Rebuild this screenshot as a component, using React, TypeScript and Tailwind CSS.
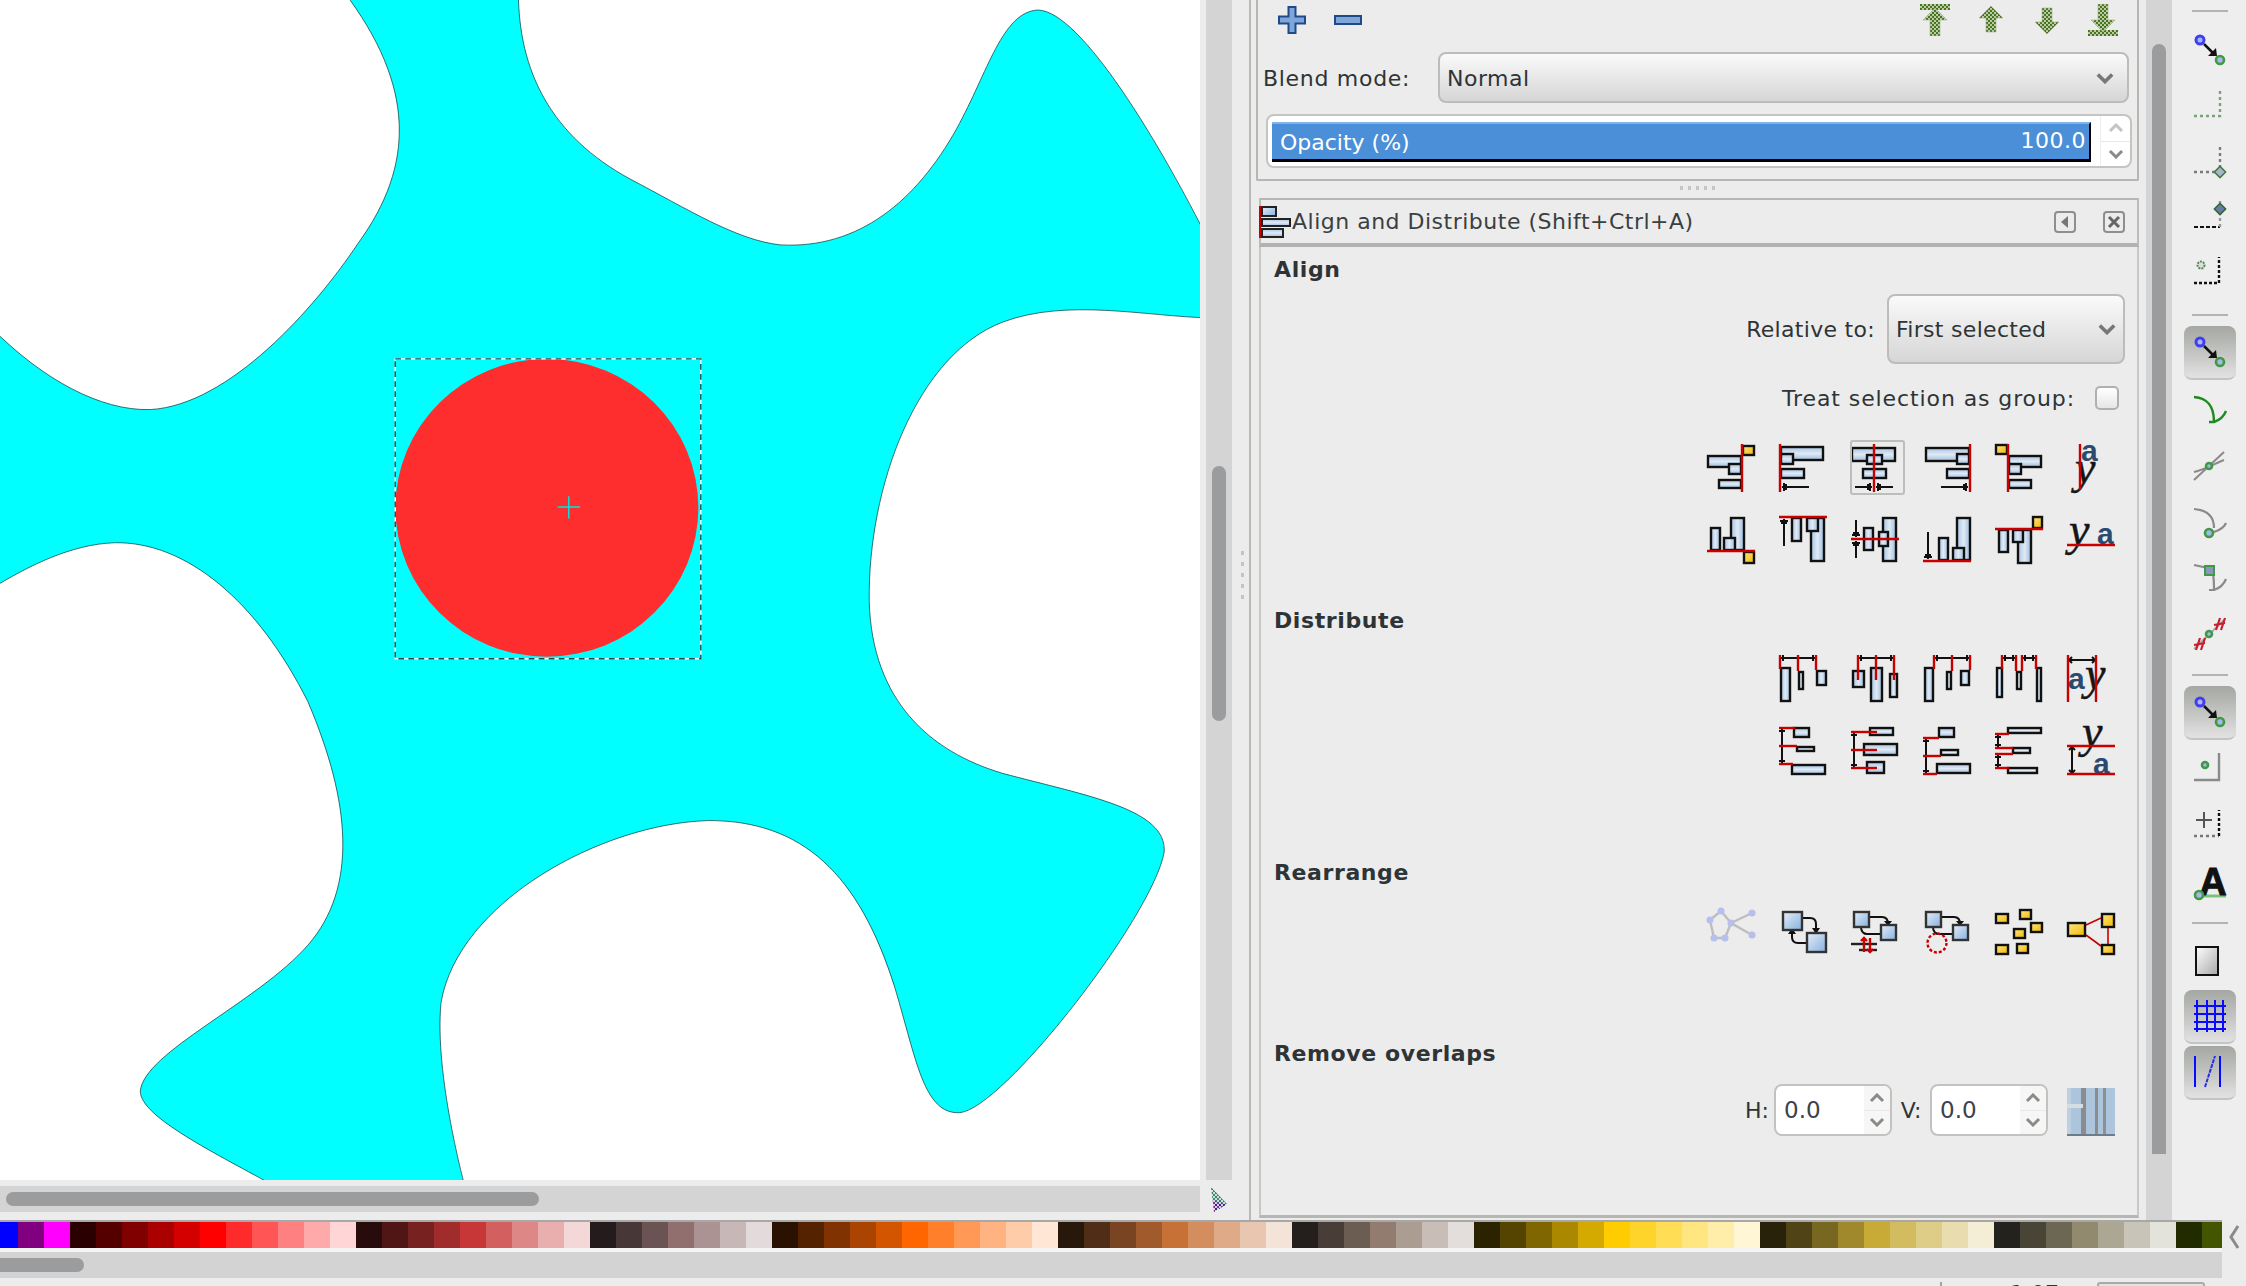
import React from "react";

const FONT = "font-['DejaVu_Sans',sans-serif]";

const Defs = () => (
  <svg width="0" height="0" className="absolute">
    <defs>
      <linearGradient id="bh" x1="0" y1="0" x2="0" y2="1">
        <stop offset="0" stopColor="#a9c3e0" />
        <stop offset="0.5" stopColor="#dfeaf6" />
        <stop offset="1" stopColor="#9fbcdb" />
      </linearGradient>
      <linearGradient id="bv" x1="0" y1="0" x2="1" y2="0">
        <stop offset="0" stopColor="#a9c3e0" />
        <stop offset="0.5" stopColor="#dfeaf6" />
        <stop offset="1" stopColor="#9fbcdb" />
      </linearGradient>
      <linearGradient id="sq" x1="0" y1="0" x2="1" y2="1">
        <stop offset="0" stopColor="#e6eef8" />
        <stop offset="1" stopColor="#86b0de" />
      </linearGradient>
      <linearGradient id="yl" x1="0" y1="0" x2="1" y2="1">
        <stop offset="0" stopColor="#ffe680" />
        <stop offset="1" stopColor="#f2b705" />
      </linearGradient>
      <linearGradient id="pg" x1="0" y1="0" x2="1" y2="1">
        <stop offset="0" stopColor="#ffffff" />
        <stop offset="1" stopColor="#a8a8a8" />
      </linearGradient>
      <pattern id="gc" width="4" height="4" patternUnits="userSpaceOnUse">
        <rect width="4" height="4" fill="#b9cba0" />
        <rect width="2" height="2" fill="#4a7424" />
        <rect x="2" y="2" width="2" height="2" fill="#4a7424" />
      </pattern>
      <pattern id="cm" width="4" height="4" patternUnits="userSpaceOnUse">
        <rect width="4" height="4" fill="#d8dcd8" />
        <rect width="2" height="2" fill="#2f9a5f" />
        <rect x="2" y="2" width="2" height="2" fill="#3a7a7a" />
      </pattern>
      <pattern id="cn" width="4" height="4" patternUnits="userSpaceOnUse">
        <rect width="4" height="4" fill="#d8d0dc" />
        <rect width="2" height="2" fill="#8a2f9a" />
        <rect x="2" y="2" width="2" height="2" fill="#2a2a9a" />
      </pattern>
    </defs>
  </svg>
);

type N = number[];
type Ic = {
  b?: N[];
  s?: N[];
  y?: N[];
  r?: N[];
  k?: N[];
  extra?: React.ReactNode;
  o?: number;
};

const RED = "#c80000";

const vr = (x: number, y2 = 48, y1 = 0) => [x, y1, x, y2];
const hr = (y: number, x2 = 48, x1 = 0) => [x1, y, x2, y];

const harrow = (y: number, from: number, to: number): N[] => {
  const d = to > from ? -1 : 1;
  return [
    [from, y, to, y],
    [to + d * 2, y - 4, to + d * 2, y + 4],
    [to + d * 4, y - 3, to + d * 4, y + 3],
  ];
};
const varrow = (x: number, from: number, to: number): N[] => {
  const d = to > from ? -1 : 1;
  return [
    [x, from, x, to],
    [x - 4, to + d * 2, x + 4, to + d * 2],
    [x - 3, to + d * 4, x + 3, to + d * 4],
  ];
};
const hdim = (y: number, ...xs: number[]): N[] => [
  [xs[0], y, xs[xs.length - 1], y],
  ...xs.slice(1, -1).map((x) => [x, y - 3, x, y + 3]),
  [xs[0] + 3, y - 3, xs[0] + 3, y + 3],
  [xs[xs.length - 1] - 3, y - 3, xs[xs.length - 1] - 3, y + 3],
];
const vdim = (x: number, ...ys: number[]): N[] => [
  [x, ys[0], x, ys[ys.length - 1]],
  ...ys.slice(1, -1).map((y) => [x - 3, y, x + 3, y]),
  [x - 3, ys[0] + 3, x + 3, ys[0] + 3],
  [x - 3, ys[ys.length - 1] - 3, x + 3, ys[ys.length - 1] - 3],
];

const GA = ({ x, y, s = 30 }: { x: number; y: number; s?: number }) => (
  <text x={x} y={y} fontFamily="Liberation Sans" fontWeight="700" fontSize={s} fill="#2c4a6e">
    a
  </text>
);
const GY = ({ x, y, s = 46 }: { x: number; y: number; s?: number }) => (
  <text x={x} y={y} fontFamily="Liberation Serif" fontStyle="italic" fontSize={s} fill="#151515" stroke="#151515" strokeWidth="0.5">
    y
  </text>
);

const Icon = ({ d }: { d: Ic }) => (
  <svg width="48" height="48" viewBox="0 0 48 48" overflow="visible" opacity={d.o ?? 1}>
    {d.extra}
    {d.b?.map((b, i) => (
      <rect
        key={"b" + i}
        x={b[0] + 1}
        y={b[1] + 1}
        width={b[2] - 2}
        height={b[3] - 2}
        fill={b[2] > b[3] ? "url(#bh)" : "url(#bv)"}
        stroke="#111"
        strokeWidth="2.4"
      />
    ))}
    {d.s?.map((b, i) => (
      <rect key={"s" + i} x={b[0] + 1} y={b[1] + 1} width={b[2] - 2} height={b[3] - 2} fill="url(#sq)" stroke="#333" strokeWidth="2.4" />
    ))}
    {d.y?.map((b, i) => (
      <rect key={"y" + i} x={b[0] + 1} y={b[1] + 1} width={b[2] - 2} height={b[3] - 2} fill="url(#yl)" stroke="#111" strokeWidth="2.4" />
    ))}
    {d.k?.map((l, i) => (
      <line key={"k" + i} x1={l[0]} y1={l[1]} x2={l[2]} y2={l[3]} stroke="#111" strokeWidth="2" />
    ))}
    {d.r?.map((l, i) => (
      <line key={"r" + i} x1={l[0]} y1={l[1]} x2={l[2]} y2={l[3]} stroke={RED} strokeWidth="2.4" />
    ))}
  </svg>
);

const alignRows: Ic[][] = [
  [
    { r: [vr(35)], y: [[35, 1, 13, 11]], b: [[0, 11, 35, 13], [21, 19, 14, 12], [11, 35, 24, 10]] },
    { r: [vr(1)], b: [[1, 2, 44, 15], [1, 9, 14, 12], [1, 24, 25, 11]], k: harrow(43, 30, 3) },
    { r: [vr(23)], b: [[0, 3, 45, 15], [15, 10, 17, 11], [11, 24, 25, 11]], k: [...harrow(43, 4, 21), ...harrow(43, 42, 25)] },
    { r: [vr(47)], b: [[2, 3, 45, 15], [33, 9, 14, 12], [23, 24, 24, 11]], k: harrow(43, 18, 45) },
    { r: [vr(13)], y: [[0, 0, 13, 11]], b: [[13, 11, 34, 13], [13, 19, 14, 12], [13, 35, 24, 10]] },
    { r: [vr(13, 46)], extra: <><GA x={14} y={17} /><GY x={8} y={39} /></> },
  ],
  [
    { r: [hr(35)], y: [[36, 35, 12, 13]], b: [[3, 11, 11, 24], [23, 1, 15, 34], [16, 21, 13, 14]] },
    { r: [hr(1)], b: [[12, 1, 11, 25], [31, 1, 15, 45], [27, 1, 13, 15]], k: varrow(5, 30, 3) },
    { r: [hr(23)], b: [[12, 11, 11, 24], [31, 1, 15, 45], [27, 15, 11, 16]], k: [...varrow(5, 4, 21), ...varrow(5, 42, 25)] },
    { r: [hr(45)], b: [[15, 21, 11, 24], [33, 1, 15, 44], [29, 31, 13, 14]], k: varrow(5, 16, 43) },
    { r: [hr(13)], y: [[37, 0, 11, 13]], b: [[3, 13, 11, 24], [22, 13, 15, 35], [17, 13, 12, 14]] },
    { r: [hr(29)], extra: <><GY x={2} y={29} /><GA x={30} y={28} /></> },
  ],
];

const distRows: Ic[][] = [
  [
    { r: [vr(1, 14), vr(19, 16), vr(37, 15)], b: [[1, 12, 11, 35], [19, 16, 6, 19], [37, 15, 11, 16]], k: hdim(3, 1, 19, 37) },
    { b: [[1, 15, 13, 18], [19, 12, 13, 35], [38, 18, 9, 25]], r: [vr(7, 25), vr(25, 25), vr(43, 25)], k: hdim(3, 7, 25, 43) },
    { r: [vr(11, 14), vr(29, 16), vr(47, 15)], b: [[1, 12, 10, 35], [23, 16, 6, 19], [37, 15, 10, 16]], k: hdim(3, 11, 29, 47) },
    { r: [vr(7, 14), vr(21, 16), vr(27, 16), vr(41, 14)], b: [[1, 12, 7, 31], [21, 16, 6, 19], [41, 12, 6, 35]], k: [...hdim(3, 7, 21), ...hdim(3, 27, 41)] },
    { r: [vr(1, 47), vr(29, 47)], k: [[2, 5, 28, 5], [5, 2, 2, 5], [5, 8, 2, 5], [25, 2, 28, 5], [25, 8, 28, 5]], extra: <><GA x={1} y={34} /><GY x={18} y={34} /></> },
  ],
  [
    { r: [hr(1, 16), hr(19, 18), hr(37, 14)], b: [[14, 0, 17, 11], [17, 19, 19, 6], [12, 37, 35, 11]], k: vdim(3, 1, 19, 37) },
    { b: [[18, 0, 25, 9], [12, 16, 35, 13], [15, 34, 19, 13]], r: [hr(5, 26), hr(23, 26), hr(41, 26)], k: vdim(3, 5, 23, 41) },
    { r: [hr(11, 16), hr(29, 18), hr(47, 14)], b: [[15, 0, 17, 11], [17, 22, 19, 7], [13, 36, 35, 11]], k: vdim(3, 11, 29, 47) },
    { r: [hr(7, 14), hr(21, 18), hr(27, 18), hr(41, 14)], b: [[12, 0, 35, 7], [17, 20, 19, 7], [12, 40, 31, 7]], k: [...vdim(3, 7, 21), ...vdim(3, 27, 41)] },
    { r: [hr(19), hr(47)], k: [[5, 20, 5, 46], [2, 23, 5, 20], [8, 23, 5, 20], [2, 43, 5, 46], [8, 43, 5, 46]], extra: <><GY x={15} y={20} /><GA x={26} y={47} /></> },
  ],
];

const Curve = ({ d }: { d: string }) => <path d={d} fill="none" stroke="#111" strokeWidth="2" />;
const Head = ({ p }: { p: string }) => <polygon points={p} fill="#111" />;

const rearrange: Ic[] = [
  {
    extra: (
      <g opacity="0.55">
        <polyline points="14,3 3,12 7,30 18,30 24,15 14,3" fill="none" stroke="#9a9a9a" strokeWidth="2.4" />
        <polyline points="45,5 24,15 45,27" fill="none" stroke="#9a9a9a" strokeWidth="2.4" />
        {[[14, 3], [3, 12], [7, 30], [18, 30], [24, 15], [45, 5], [45, 27]].map((c, i) => (
          <circle key={i} cx={c[0]} cy={c[1]} r="3.5" fill="#8c9cf0" />
        ))}
      </g>
    ),
  },
  {
    s: [[3, 3, 21, 20], [27, 24, 21, 21]],
    extra: (
      <>
        <Curve d="M24 10 H31 Q37 10 37 16 V24" />
        <Head p="33,20 41,20 37,26" />
        <Curve d="M27 35 H19 Q13 35 13 29 V23" />
        <Head p="9,26 17,26 13,20" />
      </>
    ),
  },
  {
    s: [[2, 3, 17, 17], [29, 16, 17, 17]],
    extra: (
      <>
        <Curve d="M19 9 H31 Q37 9 37 16" />
        <Head p="33,13 41,13 37,18" />
        <Curve d="M29 26 H16 Q11 26 10 20" />
        <line x1="0" y1="36" x2="26" y2="36" stroke="#222" strokeWidth="2.4" />
        <line x1="8" y1="42" x2="26" y2="42" stroke="#222" strokeWidth="2.4" />
        <path d="M13 44 V30 M10 33 L13 30 L16 33 M19 30 V44 M16 41 L19 44 L22 41" fill="none" stroke={RED} strokeWidth="2.4" />
      </>
    ),
  },
  {
    s: [[2, 3, 17, 17], [29, 16, 17, 17]],
    extra: (
      <>
        <Curve d="M19 9 H31 Q37 9 37 16" />
        <Head p="33,13 41,13 37,18" />
        <Curve d="M29 26 H16 Q11 26 10 20" />
        <circle cx="14" cy="35" r="9.5" fill="none" stroke={RED} strokeWidth="2.4" strokeDasharray="3 2" />
      </>
    ),
  },
  { y: [[0, 5, 14, 11], [24, 1, 13, 11], [35, 14, 13, 11], [18, 20, 13, 11], [0, 36, 14, 11], [21, 35, 13, 11]] },
  {
    extra: (
      <g stroke={RED} strokeWidth="1.6">
        <line x1="19" y1="17" x2="34" y2="10" />
        <line x1="19" y1="27" x2="34" y2="38" />
        <line x1="41" y1="20" x2="41" y2="36" />
      </g>
    ),
    y: [[0, 14, 19, 15], [34, 5, 14, 15], [34, 36, 14, 11]],
  },
];

const Chevron = ({ up = false, c = "#8a8a87", w = 16, h = 10 }: { up?: boolean; c?: string; w?: number; h?: number }) => (
  <svg width={w} height={h} viewBox="0 0 16 10">
    <path d={up ? "M2 8 L8 2 L14 8" : "M2 2 L8 8 L14 2"} fill="none" stroke={c} strokeWidth="3" />
  </svg>
);

const Spin = ({ v }: { v: string }) => (
  <div className="flex h-[52px] w-[118px] shrink-0 overflow-hidden rounded-lg border-2 border-[#c2c2be] bg-white">
    <div className="flex flex-1 items-center pl-[8px] text-[23px] text-[#3c4245]">{v}</div>
    <div className="flex w-[26px] flex-col bg-[#f6f6f6]">
      <div className="flex flex-1 items-center justify-center border-b border-[#e8e8e8]">
        <Chevron up />
      </div>
      <div className="flex flex-1 items-center justify-center">
        <Chevron />
      </div>
    </div>
  </div>
);

const Header = ({ children, cls }: { children: React.ReactNode; cls: string }) => (
  <div className={`flex h-[44px] shrink-0 items-center pl-[13px] text-[22px] font-bold tracking-[0.6px] text-[#2e3436] ${cls}`}>{children}</div>
);

const IconRow = ({ icons, cls }: { icons: Ic[]; cls?: string }) => (
  <div className={`flex justify-end pr-[10px] ${cls ?? ""}`}>
    {icons.map((d, i) => (
      <div key={i} className="flex h-[72px] w-[72px] items-center justify-center">
        <Icon d={d} />
      </div>
    ))}
  </div>
);

const Canvas = () => (
  <svg viewBox="0 0 838 824" className="block h-full w-full bg-white" preserveAspectRatio="none">
    <path
      d="M362 -6 C362 50 385 95 440 125 C480 146 515 168 545 171 C600 174 640 140 668 90 C690 50 700 8 725 7 C755 8 810 100 845 170 L845 222 C800 221 745 208 700 225 C640 248 606 340 607 420 C609 490 650 525 700 540 C760 556 815 565 813 595 C805 640 700 775 670 777 C645 778 640 740 625 690 C600 610 560 573 495 573 C420 575 320 630 308 700 C303 750 325 830 325 830 L195 830 C150 805 98 780 98 762 C100 735 180 700 215 660 C250 620 245 560 215 490 C180 420 130 378 80 379 C50 380 20 395 -6 411 L-6 229 C30 265 70 287 105 286 C160 283 220 215 250 170 C290 115 290 60 240 -6 Z"
      fill="#00ffff"
      stroke="#0a3a3a"
      strokeWidth="0.5"
    />
    <ellipse cx="381.9" cy="354.6" rx="105.8" ry="104" fill="#ff2e2e" />
    <rect x="276" y="250.6" width="213.4" height="209.4" fill="none" stroke="#ffffff" strokeWidth="1" />
    <rect x="276" y="250.6" width="213.4" height="209.4" fill="none" stroke="#0c5258" strokeWidth="1" strokeDasharray="4 3" />
    <path d="M389.5 354 H405 M397.2 346.5 V362" stroke="#00e5e5" strokeWidth="1" />
  </svg>
);

const T = ({ children }: { children: React.ReactNode }) => (
  <svg width="36" height="36" viewBox="-2 -2 36 36" overflow="visible">
    {children}
  </svg>
);
const GN = ({ x, y, r = 4 }: { x: number; y: number; r?: number }) => (
  <circle cx={x} cy={y} r={r} fill="#a9b4e8" stroke="#3f9a46" strokeWidth="2.6" />
);
const Snap = () => (
  <T>
    <circle cx="6" cy="6" r="4" fill="#a9b4f0" stroke="#4040f0" strokeWidth="3" />
    <line x1="10" y1="10" x2="20" y2="20" stroke="#111" strokeWidth="2.5" />
    <polygon points="23,22 14,22 22,14" fill="#111" />
    <GN x={26} y={26} />
  </T>
);
const Dash = ({ d, c = "#777", a = "3 3" }: { d: string; c?: string; a?: string }) => (
  <path d={d} fill="none" stroke={c} strokeWidth="2.4" strokeDasharray={a} />
);

const toolbar: { h: string; btn?: boolean; sep?: boolean; el?: React.ReactNode }[] = [
  { h: "h-[76px]", el: <Snap /> },
  { h: "h-[36px]", el: <T><Dash d="M0 26 H26 V0" c="#7aa27a" /></T> },
  { h: "h-[76px]", el: <T><Dash d="M0 26 H26 V0" c="#7b7b7b" /><rect x="22" y="22" width="8" height="8" transform="rotate(45 26 26)" fill="#a9b4c8" stroke="#3f7a46" strokeWidth="1.5" /></T> },
  { h: "h-[34px]", el: <T><path d="M0 26 H26" stroke="#111" strokeWidth="2" strokeDasharray="4 2" /><Dash d="M26 26 V0" c="#999" /><rect x="22" y="4" width="8" height="8" transform="rotate(45 26 8)" fill="#6a7aa8" stroke="#2f6a36" strokeWidth="1.5" /></T> },
  { h: "h-[78px]", el: <T><Dash d="M0 26 H25 V0" c="#111" a="3 2" /><circle cx="7" cy="8" r="3.5" fill="#ddd" stroke="#4f8a56" strokeWidth="2" strokeDasharray="2 1" /></T> },
  { h: "h-[6px]", sep: true },
  { h: "h-[8px]" },
  { h: "h-[54px]", btn: true, el: <Snap /> },
  { h: "h-[64px]", el: <T><path d="M0 1 C12 2 20 8 20 26 M15 26 H20 C26 24 30 20 32 15" fill="none" stroke="#1f8a1f" strokeWidth="2.4" /></T> },
  { h: "h-[44px]", el: <T><path d="M0 30 L30 2 M0 22 C10 20 20 14 30 10" fill="none" stroke="#8a8a8a" strokeWidth="2" /><GN x={15} y={16} r={3} /></T> },
  { h: "h-[72px]", el: <T><path d="M0 1 C12 2 20 8 20 20 M20 24 C26 22 30 20 32 15" fill="none" stroke="#8a8a8a" strokeWidth="2.2" /><GN x={15} y={25} /></T> },
  { h: "h-[40px]", el: <T><path d="M0 1 L14 4 C20 8 20 14 20 26 M15 26 H20 C26 24 30 20 32 15" fill="none" stroke="#8a8a8a" strokeWidth="2.2" /><rect x="11" y="2" width="9" height="9" fill="#8a96c0" stroke="#3f9a46" strokeWidth="2" /></T> },
  { h: "h-[68px]", el: <T><line x1="0" y1="31" x2="30" y2="2" stroke="#aaa" strokeWidth="2" /><path d="M6 20 L2 32 M11 20 L7 32 M0 27 L11 25 M26 0 L22 12 M31 0 L27 12 M20 7 L31 5" stroke="#c81e2e" strokeWidth="2.2" /><GN x={15} y={16} r={3} /></T> },
  { h: "h-[14px]", sep: true },
  { h: "h-[4px]" },
  { h: "h-[54px]", btn: true, el: <Snap /> },
  { h: "h-[58px]", el: <T><path d="M0 27 H25 V0" fill="none" stroke="#8a8a8a" strokeWidth="2.4" /><GN x={11} y={12} r={3} /></T> },
  { h: "h-[56px]", el: <T><path d="M2 10 H18 M10 2 V18" stroke="#555" strokeWidth="2" /><Dash d="M0 26 H25" c="#777" /><Dash d="M25 26 V0" c="#111" a="3 2" /></T> },
  { h: "h-[58px]", el: <T>
    <path d="M0 29 H32" stroke="#7cc07c" strokeWidth="3" />
    <text x="19" y="28" textAnchor="middle" fontFamily="Liberation Sans" fontWeight="700" fontSize="38" stroke="#111" strokeWidth="1" fill="#111">A</text>
    <GN x={5} y={28} />
  </T> },
  { h: "h-[22px]", sep: true },
  { h: "h-[56px]", el: <T><rect x="2" y="1" width="22" height="28" fill="url(#pg)" stroke="#111" strokeWidth="2" /></T> },
  { h: "h-[54px]", btn: true, el: <T><path d="M0 6 H32 M0 14 H32 M0 22 H32 M0 29 H32 M3 0 V32 M13 0 V32 M21 0 V32 M29 0 V32" stroke="#0a0aff" strokeWidth="2" /></T> },
  { h: "h-[2px]" },
  { h: "h-[54px]", btn: true, el: <T><path d="M1 0 V31 M26 0 V31" stroke="#0a0aff" strokeWidth="2" /><path d="M11 31 L21 0" stroke="#2a2ae8" strokeWidth="2" strokeDasharray="4 1" /></T> },
];

const palette = [
  "#0000ff","#800080","#ff00ff",
  "#2b0000","#550000","#800000","#aa0000","#d40000","#ff0000","#ff2a2a","#ff5555","#ff8080","#ffaaaa","#ffd5d5",
  "#280b0b","#501616","#782121","#a02c2c","#c83737","#d35f5f","#de8787","#e9afaf","#f4d7d7",
  "#241c1c","#483737","#6c5353","#916f6f","#ac9393","#c8b7b7","#e3dbdb",
  "#2b1100","#552200","#803300","#aa4400","#d45500","#ff6600","#ff7f2a","#ff9955","#ffb380","#ffccaa","#ffe6d5",
  "#28170b","#502d16","#784421","#a05a2c","#c87137","#d38d5f","#deaa87","#e9c6af","#f4e3d7",
  "#241f1c","#483e37","#6c5d53","#917c6f","#ac9d93","#c8beb7","#e3dedb",
  "#2b2200","#554400","#806600","#aa8800","#d4aa00","#ffcc00","#ffd42a","#ffdd55","#ffe680","#ffeeaa","#fff6d5",
  "#28220b","#504416","#786721","#a0892c","#c8ab37","#d3bc5f","#decd87","#e9ddaf","#f4eed7",
  "#24221c","#484537","#6c6753","#918a6f","#aca793","#c8c4b7","#e3e2db",
  "#222b00","#445500",
];

const Arrow = ({ up, bar }: { up: boolean; bar?: boolean }) => (
  <svg width="30" height="32" viewBox="0 0 30 32">
    <g transform={up ? undefined : "rotate(180 15 16)"}>
      {bar && <rect x="0" y="0" width="30" height="6" fill="url(#gc)" />}
      <polygon points={bar ? "15,4 27,16 20,16 20,32 10,32 10,16 3,16" : "15,2 27,14 20,14 20,28 10,28 10,14 3,14"} fill="url(#gc)" stroke="#9fb388" strokeWidth="0.6" />
    </g>
  </svg>
);

export default function App() {
  return (
    <div className={`flex h-[1286px] w-[2246px] flex-col overflow-hidden bg-[#ececec] text-[#2e3436] ${FONT}`}>
      <Defs />
      <div className="flex h-[1220px] shrink-0">
        {/* canvas column */}
        <div className="flex w-[1232px] shrink-0 flex-col">
          <div className="flex h-[1180px] shrink-0">
            <div className="h-full w-[1200px] shrink-0">
              <Canvas />
            </div>
            <div className="ml-[6px] flex h-full w-[26px] flex-col bg-[#d4d4d4] px-[6px] pt-[466px]">
              <div className="h-[255px] rounded-full bg-[#9b9c9e]" />
            </div>
          </div>
          <div className="mt-[6px] flex h-[26px] shrink-0">
            <div className="flex h-full w-[1200px] shrink-0 items-center bg-[#d4d4d4] pl-[6px]">
              <div className="h-[14px] w-[533px] rounded-full bg-[#9b9c9e]" />
            </div>
            <div className="ml-[9px] flex items-center">
              <svg width="20" height="26" viewBox="0 0 20 26">
                <polygon points="2,1 18,18 5,26" fill="url(#cm)" />
                <polygon points="5,26 18,18 4,15" fill="url(#cn)" />
              </svg>
            </div>
          </div>
        </div>
        {/* dock handle */}
        <div className="flex w-[19px] shrink-0 flex-col items-center border-r-2 border-[#b8b8b5] pl-[4px] pt-[551px]">
          <div className="flex flex-col gap-[7px]">
            {[0, 1, 2, 3, 4].map((i) => (
              <div key={i} className="h-[4px] w-[3px] bg-[#c4c4c2]" />
            ))}
          </div>
        </div>
        {/* dock */}
        <div className="flex w-[893px] shrink-0 flex-col pl-[5px] pr-[5px] text-[22px]">
          <div className="flex h-[181px] shrink-0 flex-col rounded-b-[2px] border-x-2 border-b-2 border-[#b6b6b3]">
            <div className="flex h-[40px] shrink-0 items-center pl-[20px] pr-[19px]">
              <svg width="28" height="28" viewBox="0 0 28 28">
                <path d="M10.5 1 H17.5 V10.5 H27 V17.5 H17.5 V27 H10.5 V17.5 H1 V10.5 H10.5 Z" fill="#7ea6d8" stroke="#1f4a8a" strokeWidth="2" />
              </svg>
              <svg className="ml-[28px]" width="28" height="10" viewBox="0 0 28 10">
                <rect x="1" y="1" width="26" height="8" fill="#7ea6d8" stroke="#1f4a8a" strokeWidth="2" />
              </svg>
              <div className="ml-auto flex items-center gap-[26px]">
                <Arrow up bar />
                <Arrow up />
                <Arrow up={false} />
                <Arrow up={false} bar />
              </div>
            </div>
            <div className="mt-[12px] flex h-[51px] shrink-0 items-center pl-[5px]">
              <div className="w-[175px] shrink-0 pt-[2px] tracking-[0.7px]">Blend mode:</div>
              <div className="flex h-full w-[691px] items-center justify-between rounded-lg border-2 border-[#bcbcb8] bg-gradient-to-b from-[#fafafa] to-[#d6d6d6] pl-[7px] pr-[12px]">
                <span className="pt-[2px] tracking-[0.5px]">Normal</span>
                <Chevron w={20} h={12} c="#777" />
              </div>
            </div>
            <div className="ml-[8px] mt-[11px] flex h-[54px] w-[866px] shrink-0 overflow-hidden rounded-lg border-2 border-[#c4c4c0] bg-white">
              <div className="ml-[4px] mt-[6px] flex h-[40px] w-[819px] items-center justify-between border-b-[3px] border-r-2 border-t-2 border-b-black border-r-black border-t-[#7fb4ec] bg-[#4a8fd8] pl-[8px] pr-[3px] text-white">
                <span className="pt-[2px]">Opacity (%)</span>
                <span className="mb-[3px] tracking-[0.5px]">100.0</span>
              </div>
              <div className="ml-[9px] flex flex-1 flex-col border-l border-[#eeeeee]">
                <div className="flex flex-1 items-center justify-center border-b border-[#e8e8e8]">
                  <Chevron up c="#c4c4c4" />
                </div>
                <div className="flex flex-1 items-center justify-center">
                  <Chevron c="#8a8a87" />
                </div>
              </div>
            </div>
          </div>
          {/* handle */}
          <div className="flex h-[17px] shrink-0 items-center justify-center gap-[5px] pb-[3px]">
            {[0, 1, 2, 3, 4].map((i) => (
              <div key={i} className="h-[4px] w-[3px] bg-[#c4c4c2]" />
            ))}
          </div>
          {/* align panel */}
          <div className="ml-[3px] flex h-[1020px] w-[880px] shrink-0 flex-col">
            <div className="flex h-[49px] shrink-0 items-center border-x-2 border-b-[4px] border-t-2 border-x-[#bcbcb9] border-b-[#b2b2b0] border-t-[#b6b6b3] pr-[12px]">
              <svg className="-ml-[2px] shrink-0" width="32" height="32" viewBox="0 0 32 32">
                <line x1="1" y1="0" x2="1" y2="32" stroke={RED} strokeWidth="2" />
                <rect x="3" y="1" width="14" height="9" fill="url(#sq)" stroke="#222" strokeWidth="2" />
                <rect x="3" y="13" width="28" height="7" fill="url(#bh)" stroke="#222" strokeWidth="2" />
                <rect x="3" y="23" width="21" height="8" fill="url(#bh)" stroke="#222" strokeWidth="2" />
              </svg>
              <span className="ml-[1px] tracking-[0.5px] text-[#3a3f41]">Align and Distribute (Shift+Ctrl+A)</span>
              <div className="ml-auto flex items-center gap-[27px]">
                <svg width="22" height="22" viewBox="0 0 22 22">
                  <rect x="1" y="1" width="20" height="20" rx="3" fill="none" stroke="#8e8e8c" strokeWidth="2" />
                  <polygon points="14,5 14,17 7,11" fill="#777" />
                </svg>
                <svg width="22" height="22" viewBox="0 0 22 22">
                  <rect x="1" y="1" width="20" height="20" rx="3" fill="none" stroke="#8e8e8c" strokeWidth="2" />
                  <path d="M6 6 L16 16 M16 6 L6 16" stroke="#666" strokeWidth="3" />
                </svg>
              </div>
            </div>
            <div className="flex flex-1 flex-col border-x-2 border-b-[3px] border-x-[#c8c8c5] border-b-[#b6b6b3]">
              <Header cls="mt-[0px]">Align</Header>
              <div className="mt-[3px] flex h-[70px] shrink-0 items-center justify-end pr-[12px]">
                <span className="mr-[12px] tracking-[0.3px]">Relative to:</span>
                <div className="flex h-full w-[238px] shrink-0 items-center justify-between rounded-lg border-2 border-[#bcbcb8] bg-gradient-to-b from-[#fafafa] to-[#d6d6d6] pl-[7px] pr-[6px]">
                  <span className="tracking-[0.3px]">First selected</span>
                  <Chevron w={20} h={12} c="#777" />
                </div>
              </div>
              <div className="mt-[14px] flex h-[40px] shrink-0 items-center justify-end pr-[18px]">
                <span className="mr-[20px] tracking-[0.9px]">Treat selection as group:</span>
                <div className="h-[24px] w-[24px] rounded-[5px] border-2 border-[#b0b0ac] bg-gradient-to-b from-[#ffffff] to-[#e6e6e6]" />
              </div>
              <div className="relative mt-[14px]">
                <IconRow icons={alignRows[0]} />
                <IconRow icons={alignRows[1]} />
                <div className="absolute left-[589px] top-[8px] h-[55px] w-[55px] rounded-[3px] border-2 border-[#bdbdba]" />
              </div>
              <Header cls="mt-[22px]">Distribute</Header>
              <IconRow icons={distRows[0]} cls="mt-[1px]" />
              <IconRow icons={distRows[1]} />
              <Header cls="mt-[63px]">Rearrange</Header>
              <IconRow icons={rearrange} cls="mt-[2px]" />
              <Header cls="mt-[63px]">Remove overlaps</Header>
              <div className="mt-[9px] flex h-[52px] shrink-0 items-center justify-end pr-[10px]">
                <span className="mr-[5px]">H:</span>
                <Spin v="0.0" />
                <span className="w-[38px] text-center">V:</span>
                <Spin v="0.0" />
                <div className="ml-[7px] flex h-full w-[72px] shrink-0 items-end justify-center">
                  <svg width="48" height="48" viewBox="0 0 48 48">
                    <rect width="48" height="48" fill="#adc5dc" />
                    <rect x="0" y="0" width="4" height="48" fill="#bcd0e2" />
                    <rect x="14" y="0" width="5" height="48" fill="#8a8d90" />
                    <rect x="28" y="0" width="3" height="48" fill="#8a8d90" />
                    <rect x="36" y="0" width="3" height="48" fill="#8c9094" />
                    <rect x="0" y="16" width="16" height="4" fill="#d8dde2" />
                    <rect x="0" y="46" width="48" height="2" fill="#6f7c8a" />
                  </svg>
                </div>
              </div>
            </div>
          </div>
        </div>
        {/* dock scrollbar */}
        <div className="ml-[2px] flex h-full w-[26px] shrink-0 flex-col bg-[#d4d4d4] px-[6px] pt-[44px]">
          <div className="h-[1110px] rounded-t-full bg-[#9b9c9e]" />
        </div>
        {/* right toolbar */}
        <div className="flex w-[74px] shrink-0 flex-col items-center bg-[#eeeeee] pt-[10px] pl-[2px]">
          <div className="h-[2px] w-[36px] shrink-0 bg-[#b4b4b2]" />
          {toolbar.map((t, i) =>
            t.sep ? (
              <div key={i} className={`flex ${t.h} w-full shrink-0 items-center justify-center`}>
                <div className="h-[2px] w-[36px] bg-[#b4b4b2]" />
              </div>
            ) : (
              <div
                key={i}
                className={`flex ${t.h} shrink-0 items-center justify-center ${
                  t.btn ? "w-[52px] rounded-lg border-b-2 border-[#c4c4c4] bg-gradient-to-b from-[#a4a7a2] to-[#e2e2e2]" : "w-full"
                }`}
              >
                {t.el}
              </div>
            )
          )}
        </div>
      </div>
      {/* palette */}
      <div className="flex h-[28px] shrink-0">
        <div className="w-[2222px] shrink-0 overflow-hidden border-t-2 border-[#a8a8a8]">
          <div className="-ml-[8px] flex h-[26px]">
            {palette.map((c, i) => (
              <div key={i} className="h-full w-[26px] shrink-0" style={{ backgroundColor: c }} />
            ))}
          </div>
        </div>
        <div className="flex flex-1 items-center justify-center pt-[6px] text-[#8a8a8a]">
          <svg width="12" height="26" viewBox="0 0 12 26">
            <path d="M10 2 L3 13 L10 24" fill="none" stroke="#8a8a8a" strokeWidth="3" />
          </svg>
        </div>
      </div>
      <div className="h-[4px] w-[2222px] shrink-0 bg-[#f4f4f4]" />
      <div className="flex h-[26px] w-[2222px] shrink-0 items-center bg-[#d3d3d3]">
        <div className="h-[14px] w-[84px] rounded-r-full bg-[#9b9c9e]" />
      </div>
      {/* status bar tops */}
      <div className="relative flex h-[8px] shrink-0 overflow-hidden">
        <div className="ml-[1940px] mt-[4px] h-[4px] w-[2px] bg-[#a4a4a2]" />
        <span className="absolute left-[2010px] top-[3px] text-[22px] leading-[26px] text-[#333]">1.07</span>
        <div className="absolute left-[2097px] top-[4px] h-[20px] w-[108px] rounded-t-[3px] border-2 border-[#a9aca6] bg-[#e4e2df]" />
      </div>
    </div>
  );
}
